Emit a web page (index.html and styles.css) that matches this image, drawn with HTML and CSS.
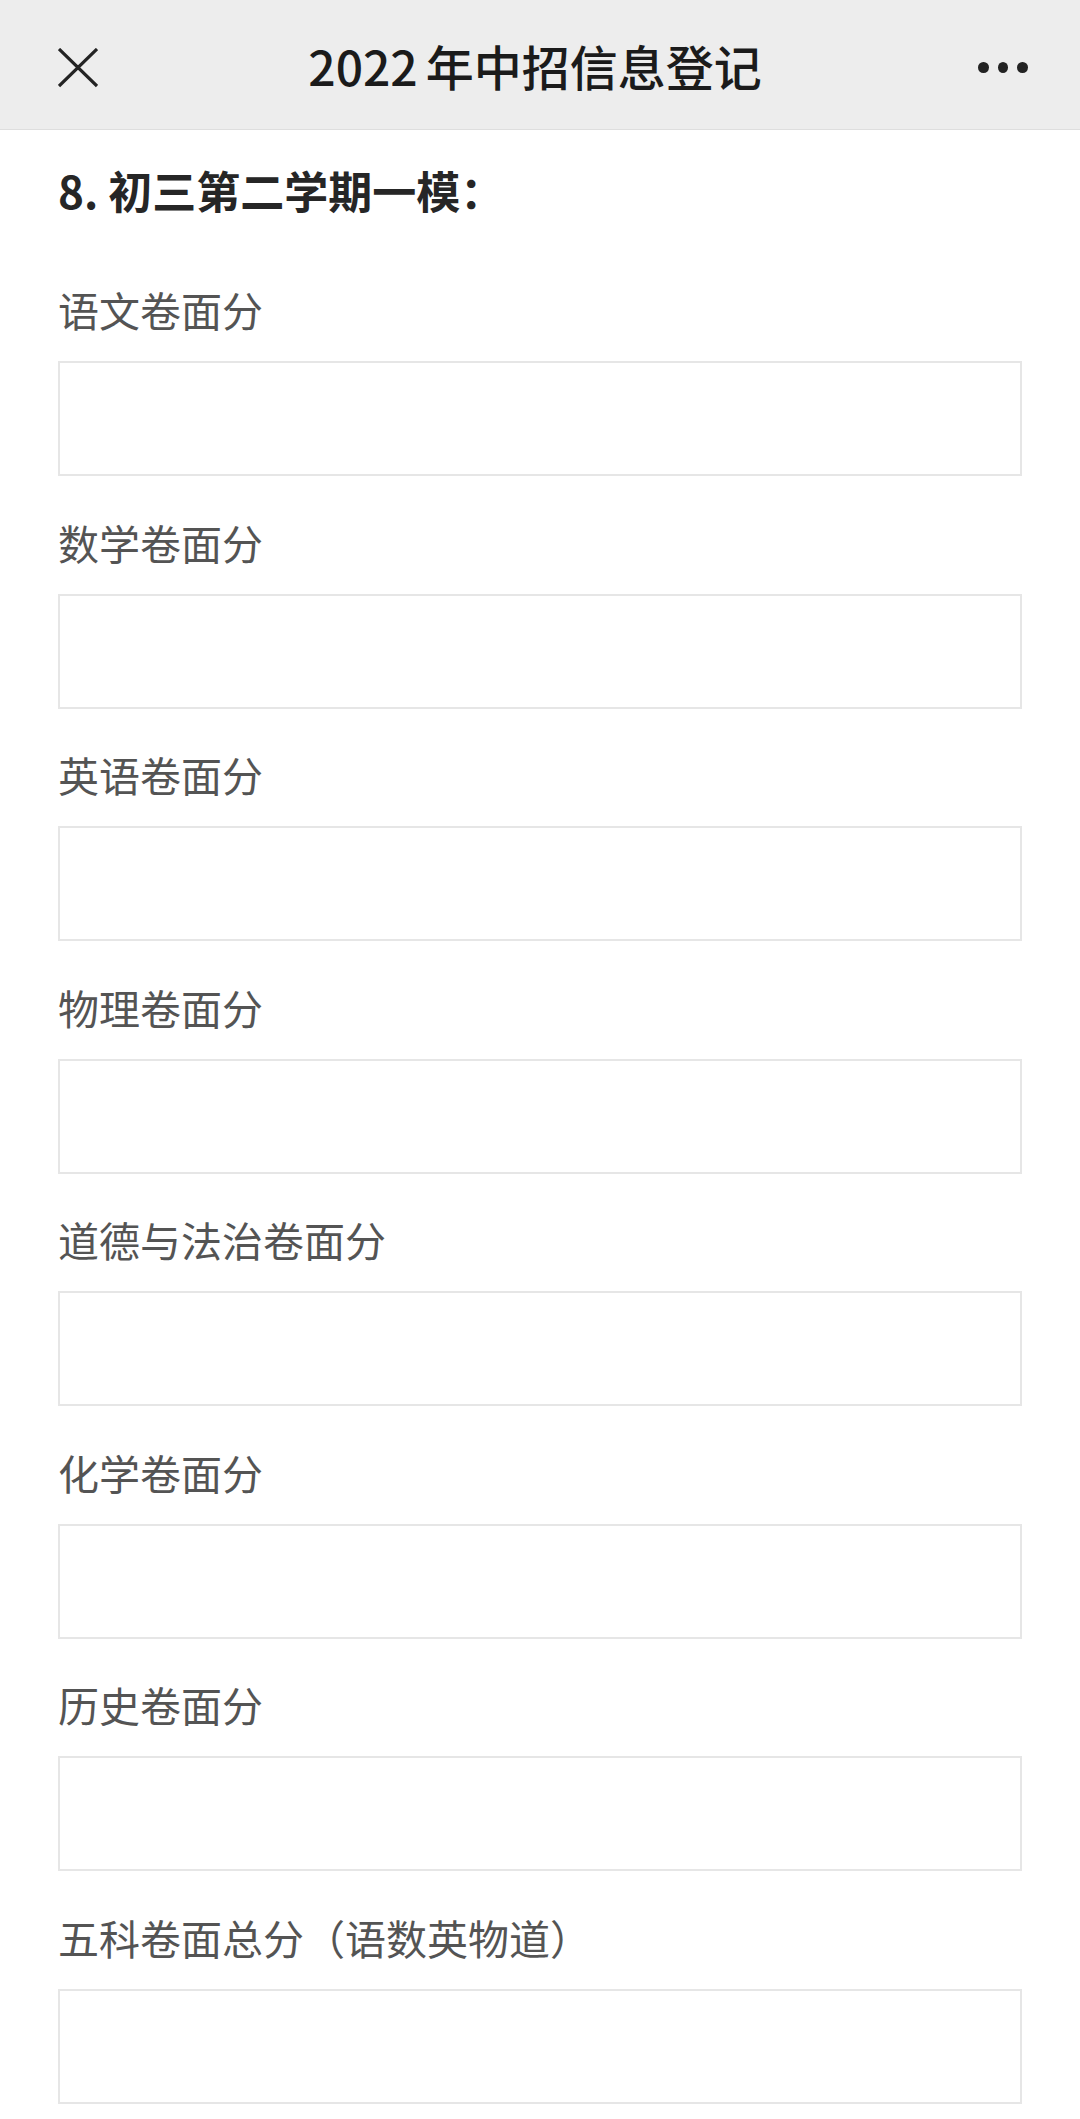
FILE: index.html
```html
<!DOCTYPE html>
<html lang="zh-CN">
<head>
<meta charset="utf-8">
<title>2022年中招信息登记</title>
<link rel="stylesheet" href="styles.css">
</head>
<body>
<header class="topbar">
  <span class="icon-close" aria-label="关闭">
    <svg width="40" height="40" viewBox="0 0 40 40"><path d="M1 1 L39 38 M39 1 L1 38" stroke="#232323" stroke-width="3.2" fill="none"/></svg>
  </span>
  <h1 class="title"><span class="year">2022</span>年中招信息登记</h1>
  <span class="icon-more" aria-label="更多">
    <i></i><i></i><i></i>
  </span>
</header>
<main class="form">
  <h2 class="section">8. 初三第二学期一模：</h2>
  <div class="field"><label class="label">语文卷面分</label><div class="input"></div></div>
  <div class="field"><label class="label">数学卷面分</label><div class="input"></div></div>
  <div class="field"><label class="label">英语卷面分</label><div class="input"></div></div>
  <div class="field"><label class="label">物理卷面分</label><div class="input"></div></div>
  <div class="field"><label class="label">道德与法治卷面分</label><div class="input"></div></div>
  <div class="field"><label class="label">化学卷面分</label><div class="input"></div></div>
  <div class="field"><label class="label">历史卷面分</label><div class="input"></div></div>
  <div class="field"><label class="label">五科卷面总分（语数英物道）</label><div class="input"></div></div>
</main>
</body>
</html>
```

FILE: styles.css
```css
html, body {
  margin: 0;
  padding: 0;
  background: #ffffff;
}
body {
  font-family: "Noto Sans CJK SC", "Noto Sans", sans-serif;
  width: 1080px;
  height: 2119px;
  overflow: hidden;
}
.topbar {
  background: #ededed;
  border-bottom: 1px solid #dedede;
  display: flex;
  align-items: center;
  justify-content: space-between;
  padding: 6px 52px 0 58px;
  box-sizing: border-box;
  height: 130px;
}
.icon-close {
  width: 40px;
  height: 40px;
  display: flex;
}
.title {
  margin: 0;
  font-size: 48px;
  font-weight: 500;
  color: #1b1b1b;
  line-height: 60px;
  flex: 1;
  text-align: center;
  padding: 0 6px 6px 0;
}
.year {
  margin-right: 8px;
}
.icon-more {
  display: flex;
  gap: 9px;
  align-items: center;
  width: 50px;
}
.icon-more i {
  width: 11px;
  height: 11px;
  border-radius: 50%;
  background: #232323;
}
.form {
  padding: 30px 58px 0 58px;
  display: flex;
  flex-direction: column;
}
.section {
  margin: 0;
  font-size: 44px;
  line-height: 60px;
  font-weight: 700;
  color: #262626;
}
.field {
  display: flex;
  flex-direction: column;
  margin-top: 61px;
}
.field + .field {
  margin-top: 37.5px;
}
.label {
  font-size: 41px;
  line-height: 56px;
  color: #545454;
}
.input {
  margin-top: 24px;
  height: 115px;
  box-sizing: border-box;
  border: 2px solid #e6e6e6;
  background: #fff;
}
```
